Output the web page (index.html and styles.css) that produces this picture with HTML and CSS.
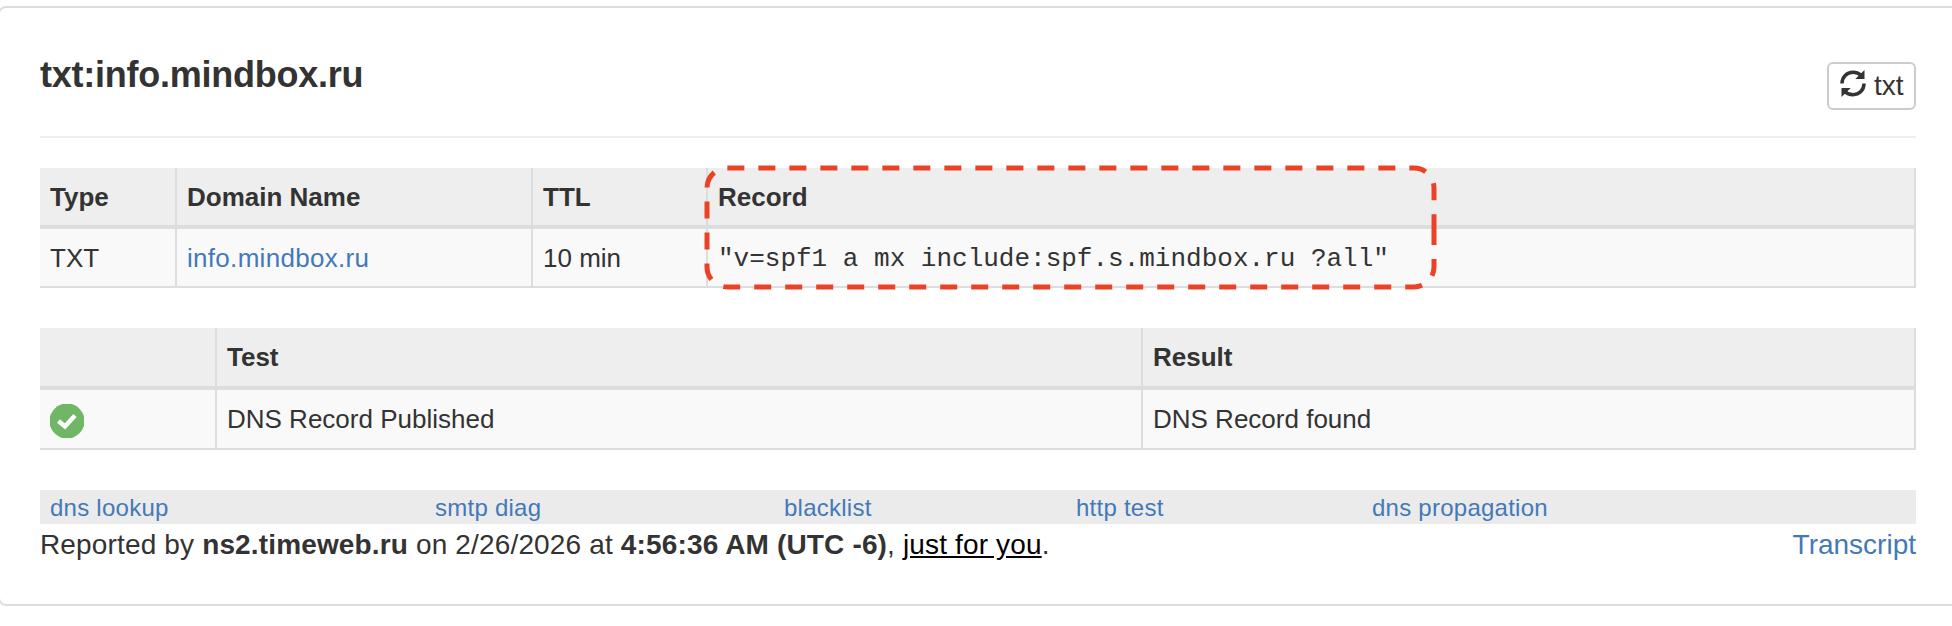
FILE: index.html
```html
<!DOCTYPE html>
<html lang="en">
<head>
    <meta charset="UTF-8">
    <title>txt:info.mindbox.ru</title>
    <link rel="stylesheet" href="styles.css">
</head>
<body>
    <div class="panel">
        <div class="panel-top">
            <h1>txt:info.mindbox.ru</h1>
            <button class="btn">
                <svg class="refresh" viewBox="0 0 26 27">
                    <path d="M2 13.500C2 6.800 6.800 2.300 13 2.300C16.600 2.300 19.200 3.400 21.200 5.600" fill="none" stroke="#333" stroke-width="3.500"/>
                    <path d="M24.500 0V9H15.300Z" fill="#333"/>
                    <path d="M24 13.500C24 20.200 19.200 24.700 13 24.700C9.400 24.700 6.800 23.600 4.800 21.400" fill="none" stroke="#333" stroke-width="3.500"/>
                    <path d="M1.500 27V18H10.700Z" fill="#333"/>
                </svg>
                <span>txt</span>
            </button>
        </div>

        <div class="record-box">
            <table class="record-table">
                <colgroup><col class="c-type"><col class="c-domain"><col class="c-ttl"><col></colgroup>
                <thead>
                    <tr><th>Type</th><th>Domain Name</th><th>TTL</th><th>Record</th></tr>
                </thead>
                <tbody>
                    <tr>
                        <td>TXT</td>
                        <td><a class="domain" href="#">info.mindbox.ru</a></td>
                        <td>10 min</td>
                        <td class="mono">"v=spf1 a mx include:spf.s.mindbox.ru ?all"</td>
                    </tr>
                </tbody>
            </table>
            <!-- highlight around the record column -->
            <svg class="highlight" viewBox="0 0 735 127">
                <path d="M731 64V103A20 20 0 0 1 711 123H24A20 20 0 0 1 4 103V24A20 20 0 0 1 24 4H711A20 20 0 0 1 731 24Z"/>
            </svg>
        </div>

        <table class="test-table">
            <colgroup><col class="c-icon"><col class="c-test"><col></colgroup>
            <thead>
                <tr><th></th><th>Test</th><th>Result</th></tr>
            </thead>
            <tbody>
                <tr>
                    <td>
                        <svg class="ok" viewBox="0 0 34 34">
                            <circle cx="17" cy="17" r="17.500" fill="#71b566"/>
                            <path d="M8.500 17L15 22.500L25 11.500" fill="none" stroke="#fff" stroke-width="4.500"/>
                        </svg>
                    </td>
                    <td>DNS Record Published</td>
                    <td>DNS Record found</td>
                </tr>
            </tbody>
        </table>

        <div class="tools">
            <a href="#">dns lookup</a>
            <a href="#">smtp diag</a>
            <a href="#">blacklist</a>
            <a href="#">http test</a>
            <a href="#">dns propagation</a>
        </div>

        <div class="report">
            <span class="reported">Reported by <b>ns2.timeweb.ru</b> on 2/26/2026 at <b>4:56:36 AM (UTC -6)</b>, <a class="just" href="#">just for you</a>.</span>
            <a href="#">Transcript</a>
        </div>
    </div>
</body>
</html>
```
FILE: styles.css
```css
* {
    box-sizing: border-box;
}

body {
    margin: 0;
    overflow: hidden;
    background-color: #fff;
    color: #333;
    font-family: "Liberation Sans", Arial, sans-serif;
    font-size: 26px;
}

a {
    color: #4479b7;
    text-decoration: none;
}

.panel {
    width: 1990px;
    height: 600px;
    margin: 6px 0 0 -2px;
    padding: 0 70px 0 40px;
    border: 2px solid #ddd;
    border-radius: 8px;
}

.panel-top {
    display: flex;
    justify-content: space-between;
    align-items: flex-start;
    height: 130px;
    padding-top: 46px;
    border-bottom: 2px solid #eee;
    margin-bottom: 30px;
}

h1 {
    margin: 1px 0 0;
    font-size: 36px;
    line-height: 40px;
    letter-spacing: -0.25px;
}

.btn {
    display: flex;
    align-items: center;
    gap: 8px;
    width: 89px;
    height: 48px;
    margin-top: 8px;
    padding: 0 0 0 11px;
    border: 2px solid #ccc;
    border-radius: 6px;
    background-color: #fff;
    color: #333;
    font-family: inherit;
    font-size: 28px;
}

.refresh {
    width: 26px;
    height: 27px;
    margin-top: -5px;
}

table {
    width: 100%;
    table-layout: fixed;
    border-collapse: separate;
    border-spacing: 0;
    border-right: 2px solid #ddd;
}

th, td {
    height: 59px;
    padding: 0 10px;
    border-bottom: 2px solid #ddd;
    text-align: left;
    line-height: 36px;
    background-color: #f9f9f9;
}

th {
    height: 61px;
    border-bottom-width: 4px;
    background-color: #eee;
}

th + th, td + td {
    border-left: 2px solid #ddd;
}

.c-type { width: 135px; }
.c-domain { width: 356px; }
.c-ttl { width: 175px; }
.c-icon { width: 175px; }
.c-test { width: 926px; }

.domain {
    letter-spacing: 0.3px;
}

.mono {
    padding-top: 3px;
    font-family: "Liberation Mono", "Courier New", monospace;
}

.record-box {
    position: relative;
    margin-bottom: 40px;
}

.highlight {
    position: absolute;
    left: 663px;
    top: -4px;
    width: 735px;
    height: 127px;
}

.highlight path {
    fill: none;
    stroke: #eb4226;
    stroke-width: 5;
    stroke-dasharray: 17 14;
}

.test-table {
    margin-bottom: 40px;
}

.test-table th {
    height: 62px;
}

.test-table td {
    height: 60px;
}

.ok {
    display: block;
    width: 34px;
    height: 34px;
    margin-top: 3px;
}

.tools {
    display: grid;
    grid-template-columns: 385px 349px 292px 296px 1fr;
    height: 34px;
    padding-left: 10px;
    background-color: #ebebeb;
    font-size: 24px;
    line-height: 36px;
    letter-spacing: 0.25px;
}

.report {
    display: flex;
    justify-content: space-between;
    padding-top: 1px;
    font-size: 28px;
    line-height: 40px;
}

.reported {
    letter-spacing: 0.15px;
}

.just {
    color: #000;
    text-decoration: underline;
}
```
